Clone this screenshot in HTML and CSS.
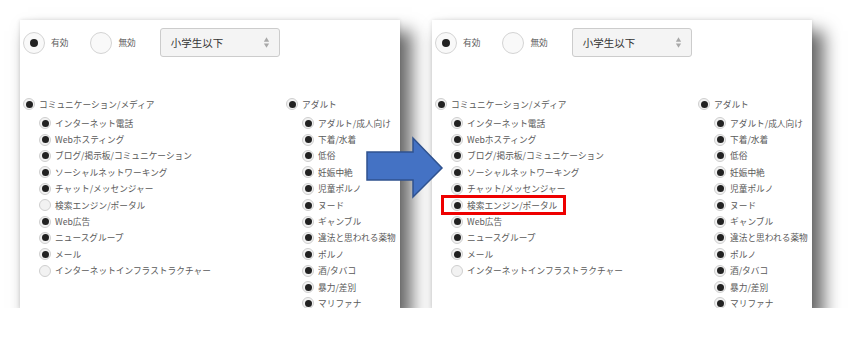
FILE: index.html
```html
<!DOCTYPE html>
<html lang="ja">
<head>
  <meta charset="UTF-8" />
  <title>フィルタ設定</title>
  <meta name="viewport" content="width=device-width, initial-scale=1.0"/>
  <link rel="stylesheet" href="styles.css">
</head>
<body>
  <div class="stage">

    <!-- 変更前 -->
    <div class="panel">
      <div class="toggle-row">
        <span class="toggle"><span class="toggle-dot"></span></span>
        <span class="toggle-label">有効</span>
        <span class="toggle"></span>
        <span class="toggle-label">無効</span>
        <div class="age-select">
          <span>小学生以下</span>
          <svg class="spin" viewBox="0 0 8 14"><path d="M4 1L7 6H1z" fill="#a8a8a8"/><path d="M4 13L7 8H1z" fill="#a8a8a8"/></svg>
        </div>
      </div>
      <div class="filter-grid">
        <div class="group">
          <div class="group-title"><span class="radio on"></span>コミュニケーション/メディア</div>
          <div class="item"><span class="radio on"></span>インターネット電話</div>
          <div class="item"><span class="radio on"></span>Webホスティング</div>
          <div class="item"><span class="radio on"></span>ブログ/掲示板/コミュニケーション</div>
          <div class="item"><span class="radio on"></span>ソーシャルネットワーキング</div>
          <div class="item"><span class="radio on"></span>チャット/メッセンジャー</div>
          <div class="item"><span class="radio"></span>検索エンジン/ポータル</div>
          <div class="item"><span class="radio on"></span>Web広告</div>
          <div class="item"><span class="radio on"></span>ニュースグループ</div>
          <div class="item"><span class="radio on"></span>メール</div>
          <div class="item"><span class="radio"></span>インターネットインフラストラクチャー</div>
        </div>
        <div class="group">
          <div class="group-title"><span class="radio on"></span>アダルト</div>
          <div class="item"><span class="radio on"></span>アダルト/成人向け</div>
          <div class="item"><span class="radio on"></span>下着/水着</div>
          <div class="item"><span class="radio on"></span>低俗</div>
          <div class="item"><span class="radio on"></span>妊娠中絶</div>
          <div class="item"><span class="radio on"></span>児童ポルノ</div>
          <div class="item"><span class="radio on"></span>ヌード</div>
          <div class="item"><span class="radio on"></span>ギャンブル</div>
          <div class="item"><span class="radio on"></span>違法と思われる薬物</div>
          <div class="item"><span class="radio on"></span>ポルノ</div>
          <div class="item"><span class="radio on"></span>酒/タバコ</div>
          <div class="item"><span class="radio on"></span>暴力/差別</div>
          <div class="item"><span class="radio on"></span>マリファナ</div>
        </div>
      </div>
    </div>

    <!-- 変更後 -->
    <div class="panel">
      <div class="toggle-row">
        <span class="toggle"><span class="toggle-dot"></span></span>
        <span class="toggle-label">有効</span>
        <span class="toggle"></span>
        <span class="toggle-label">無効</span>
        <div class="age-select">
          <span>小学生以下</span>
          <svg class="spin" viewBox="0 0 8 14"><path d="M4 1L7 6H1z" fill="#a8a8a8"/><path d="M4 13L7 8H1z" fill="#a8a8a8"/></svg>
        </div>
      </div>
      <div class="filter-grid">
        <div class="group">
          <div class="group-title"><span class="radio on"></span>コミュニケーション/メディア</div>
          <div class="item"><span class="radio on"></span>インターネット電話</div>
          <div class="item"><span class="radio on"></span>Webホスティング</div>
          <div class="item"><span class="radio on"></span>ブログ/掲示板/コミュニケーション</div>
          <div class="item"><span class="radio on"></span>ソーシャルネットワーキング</div>
          <div class="item"><span class="radio on"></span>チャット/メッセンジャー</div>
          <div class="item highlight"><span class="radio on"></span>検索エンジン/ポータル</div>
          <div class="item"><span class="radio on"></span>Web広告</div>
          <div class="item"><span class="radio on"></span>ニュースグループ</div>
          <div class="item"><span class="radio on"></span>メール</div>
          <div class="item"><span class="radio"></span>インターネットインフラストラクチャー</div>
        </div>
        <div class="group">
          <div class="group-title"><span class="radio on"></span>アダルト</div>
          <div class="item"><span class="radio on"></span>アダルト/成人向け</div>
          <div class="item"><span class="radio on"></span>下着/水着</div>
          <div class="item"><span class="radio on"></span>低俗</div>
          <div class="item"><span class="radio on"></span>妊娠中絶</div>
          <div class="item"><span class="radio on"></span>児童ポルノ</div>
          <div class="item"><span class="radio on"></span>ヌード</div>
          <div class="item"><span class="radio on"></span>ギャンブル</div>
          <div class="item"><span class="radio on"></span>違法と思われる薬物</div>
          <div class="item"><span class="radio on"></span>ポルノ</div>
          <div class="item"><span class="radio on"></span>酒/タバコ</div>
          <div class="item"><span class="radio on"></span>暴力/差別</div>
          <div class="item"><span class="radio on"></span>マリファナ</div>
        </div>
      </div>
    </div>

    <!-- 矢印 -->
    <svg class="arrow" viewBox="0 0 80 64">
      <path d="M2 16H48V2L77 32L48 61V44H2z" fill="#4472c4" stroke="#2f528f" stroke-width="1.5" stroke-linejoin="miter"/>
    </svg>
  </div>
</body>
</html>
```

FILE: styles.css
```css
body {
  margin: 0;
  background: #fff;
  font-family: "Noto Sans CJK JP", "Noto Sans", sans-serif;
  color: #5a5a5a;
  overflow: hidden;
}

/* ======================
   配置
   ====================== */
.stage {
  position: relative;
  display: flex;
  gap: 32px;
  padding: 20px 0 0 20px;
}
.panel {
  width: 380px;
  height: 288px;
  box-sizing: border-box;
  padding: 8px 0 0 3px;
  background: #fff;
  overflow: hidden;
  box-shadow: 10px 13px 16px 2px rgba(0,0,0,0.58), 0 0 4px rgba(0,0,0,0.12);
}

/* ======================
   有効 / 無効 + 年齢
   ====================== */
.toggle-row {
  display: flex;
  align-items: center;
  height: 29px;
}
.toggle {
  width: 22px;
  height: 22px;
  box-sizing: border-box;
  border: 1px solid #d4d4d4;
  border-radius: 50%;
  background: #f9f9f9;
  display: flex;
  align-items: center;
  justify-content: center;
}
.toggle-dot {
  width: 8px;
  height: 8px;
  border-radius: 50%;
  background: #222;
}
.toggle-label {
  font-size: 8.7px;
  margin: 0 22px 0 6px;
}
.age-select {
  width: 120px;
  height: 29px;
  box-sizing: border-box;
  margin-left: 2px;
  border: 1px solid #ccc;
  border-radius: 3px;
  background: #f4f4f4;
  display: flex;
  align-items: center;
  justify-content: space-between;
  padding: 0 9px 0 10px;
  font-size: 10.5px;
  color: #333;
}
.spin {
  width: 7px;
  height: 13px;
}

/* ======================
   カテゴリ一覧
   ====================== */
.filter-grid {
  display: grid;
  grid-template-columns: 263px 1fr;
  margin-top: 39px;
  font-size: 8.7px;
}
.group-title,
.item {
  height: 16.4px;
  display: flex;
  align-items: center;
  gap: 4px;
  white-space: nowrap;
}
.group-title {
  margin-bottom: 2.6px;
}
.item {
  padding-left: 16px;
}
.radio {
  width: 12px;
  height: 12px;
  box-sizing: border-box;
  border: 1px solid #cfcfcf;
  border-radius: 50%;
  background: #f2f2f2;
  display: flex;
  align-items: center;
  justify-content: center;
  flex: 0 0 auto;
}
.radio.on::before {
  content: "";
  width: 7px;
  height: 7px;
  border-radius: 50%;
  background: #222;
}

/* 赤枠 */
.item.highlight {
  position: relative;
  width: max-content;
}
.item.highlight::after {
  content: "";
  position: absolute;
  left: 6px;
  right: -9px;
  top: -1.5px;
  bottom: -1.5px;
  border: 3px solid #e00;
}

.arrow {
  position: absolute;
  left: 365px;
  top: 136px;
  width: 80px;
  height: 64px;
}
```
